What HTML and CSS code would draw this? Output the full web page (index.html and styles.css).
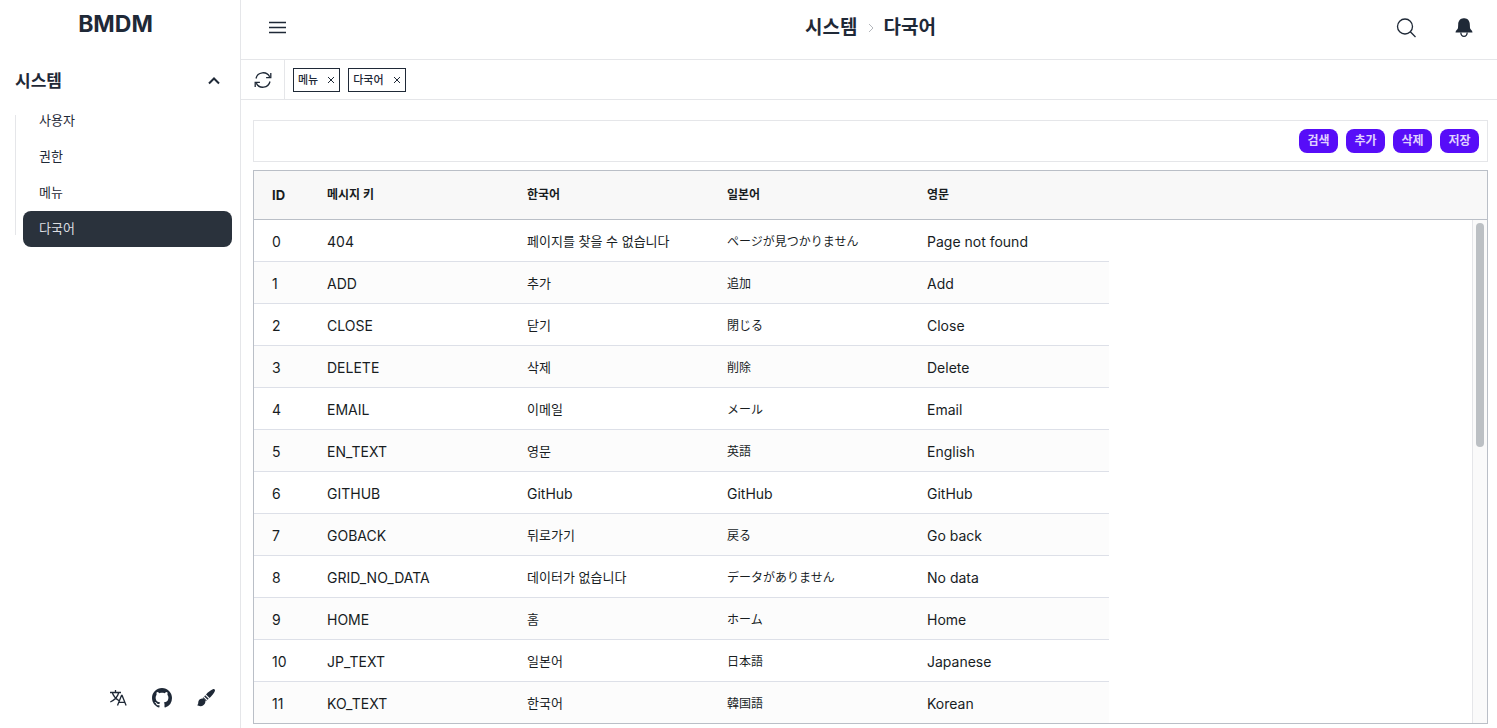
FILE: index.html
```html
<!DOCTYPE html>
<html lang="ko">
<head>
    <meta charset="UTF-8">
    <meta name="viewport" content="width=device-width, initial-scale=1.0">
    <title>BMDM</title>
    <link rel="stylesheet" href="styles.css">
</head>
<body>
    <aside class="sidebar">
        <a class="brand" href="#">BMDM</a>
        <nav class="menu">
            <button class="menu-title" type="button" aria-expanded="true">
                시스템
                <svg width="14" height="14" viewBox="0 0 14 14"><path d="M2 9.500 7 4.500l5 5" /></svg>
            </button>
            <ul class="submenu">
                <li><a href="#">사용자</a></li>
                <li><a href="#">권한</a></li>
                <li><a href="#">메뉴</a></li>
                <li><a class="active" href="#">다국어</a></li>
            </ul>
        </nav>
        <div class="sidebar-footer">
            <button class="icon-btn" type="button" aria-label="Language">
                <svg width="20" height="20" viewBox="0 0 20 20" class="line"><path d="M2 4.500h11M7.500 2v2.500M4.300 4.500c1 3.500 3.500 6.200 6.500 8M10.800 4.500C9.700 8.500 6.500 12 2.300 14M9.500 17.500l4-10h.6l4 10M10.900 14.300h5.800"/></svg>
            </button>
            <a class="icon-btn" href="#" aria-label="GitHub">
                <svg width="20" height="20" viewBox="0 0 16 16" fill="currentColor"><path d="M8 0C3.580 0 0 3.580 0 8c0 3.540 2.290 6.530 5.470 7.590.4.070.55-.17.55-.38 0-.19-.01-.82-.01-1.490-2.010.37-2.530-.49-2.690-.94-.09-.23-.48-.94-.82-1.130-.28-.15-.68-.52-.01-.53.63-.01 1.080.58 1.230.82.72 1.210 1.870.87 2.330.66.07-.52.28-.87.51-1.070-1.780-.2-3.640-.89-3.640-3.950 0-.87.31-1.590.82-2.150-.08-.2-.36-1.020.08-2.120 0 0 .67-.21 2.200.82.64-.18 1.320-.27 2-.27s1.360.09 2 .27c1.530-1.040 2.200-.82 2.200-.82.44 1.100.16 1.920.08 2.120.51.56.82 1.270.82 2.150 0 3.070-1.870 3.750-3.650 3.950.29.25.54.73.54 1.480 0 1.070-.01 1.930-.01 2.200 0 .21.15.46.55.38A8.010 8.010 0 0 0 16 8c0-4.420-3.580-8-8-8z"/></svg>
            </a>
            <button class="icon-btn" type="button" aria-label="Theme">
                <svg width="20" height="20" viewBox="0 0 20 20" fill="currentColor"><path d="M16.800 1.200c1.300-.7 2.600.5 2.100 1.800-.9 2.400-3 4.900-5.300 7l-3.600-3.600c2-2.200 4.400-4.200 6.800-5.200zM9.200 7.300l3.500 3.500-1.100 1-3.400-3.400zM6 10.600c1.800-.6 3.800 1.400 3.400 3.400-.4 2.700-2.600 4.200-5 4.200-1.300 0-2.300-.3-3.400-1.100.8-.4 1.200-1 1.200-2.200 0-2.400 1.500-4 3.800-4.300z"/><path d="M7.400 9.200l3.300 3.300-.7.7-3.300-3.300z"/></svg>
            </button>
        </div>
    </aside>

    <div class="page">
        <header class="topbar">
            <button class="icon-btn" type="button" aria-label="Toggle menu">
                <svg width="20" height="20" viewBox="0 0 20 20" class="line"><path d="M2 4.500h17M2 9.500h17M2 14.500h17"/></svg>
            </button>
            <h1 class="breadcrumb">
                <span>시스템</span>
                <svg width="6" height="10" viewBox="0 0 6 10"><path d="M1 1l4 4-4 4"/></svg>
                <span>다국어</span>
            </h1>
            <div class="topbar-actions">
                <button class="icon-btn" type="button" aria-label="Search">
                    <svg width="20" height="20" viewBox="0 0 20 20" class="line"><circle cx="9" cy="8.500" r="7.500"/><path d="M14.300 13.800l5.200 5.200"/></svg>
                </button>
                <button class="icon-btn" type="button" aria-label="Notifications">
                    <svg width="20" height="20" viewBox="0 0 20 20"><path fill="currentColor" d="M10.500.3h1c3.200.2 5.200 2.700 5.300 6L17 10c.1 1.500 2.500 2.300 2.500 4.500h-17C2.500 12.300 4.900 11.500 5 10l.2-3.700c.1-3.300 2.100-5.800 5.300-6z"/><path d="M7.800 14.500c.2 2.600 1.500 3.800 3.200 3.800s3-1.200 3.200-3.800" fill="none" stroke="currentColor" stroke-width="1.300"/></svg>
                </button>
            </div>
        </header>

        <div class="tabs">
            <button class="refresh" type="button" aria-label="Refresh">
                <svg width="20" height="20" viewBox="0 0 20 20" class="line"><path d="M3 8.500a7.300 7.300 0 0 1 13.700-1.600M17 11.500A7.300 7.300 0 0 1 3.300 13.100"/><path d="M17.800 3v4.700h-4.700M2.200 17v-4.700h4.700"/></svg>
            </button>
            <div class="tab-list">
                <div class="tab">
                    <a href="#">메뉴</a>
                    <button type="button" aria-label="메뉴 닫기"><svg width="8" height="8" viewBox="0 0 8 8"><path d="M1 1l6 6M7 1 1 7"/></svg></button>
                </div>
                <div class="tab">
                    <a href="#">다국어</a>
                    <button type="button" aria-label="다국어 닫기"><svg width="8" height="8" viewBox="0 0 8 8"><path d="M1 1l6 6M7 1 1 7"/></svg></button>
                </div>
            </div>
        </div>

        <main class="content">
            <div class="toolbar">
                <button class="btn" type="button">검색</button>
                <button class="btn" type="button">추가</button>
                <button class="btn" type="button">삭제</button>
                <button class="btn" type="button">저장</button>
            </div>

            <div class="grid">
                <table>
                    <colgroup>
                        <col class="col-id">
                        <col class="col-text">
                        <col class="col-text">
                        <col class="col-text">
                        <col class="col-text">
                        <col>
                    </colgroup>
                    <thead>
                        <tr><th>ID</th><th class="ko">메시지 키</th><th class="ko">한국어</th><th class="ko">일본어</th><th class="ko">영문</th><th class="filler"></th></tr>
                    </thead>
                    <tbody>
                        <tr><td>0</td><td>404</td><td class="ko">페이지를 찾을 수 없습니다</td><td class="ja" lang="ja">ページが見つかりません</td><td>Page not found</td><td class="filler"></td></tr>
                        <tr><td>1</td><td>ADD</td><td class="ko">추가</td><td class="ja" lang="ja">追加</td><td>Add</td><td class="filler"></td></tr>
                        <tr><td>2</td><td>CLOSE</td><td class="ko">닫기</td><td class="ja" lang="ja">閉じる</td><td>Close</td><td class="filler"></td></tr>
                        <tr><td>3</td><td>DELETE</td><td class="ko">삭제</td><td class="ja" lang="ja">削除</td><td>Delete</td><td class="filler"></td></tr>
                        <tr><td>4</td><td>EMAIL</td><td class="ko">이메일</td><td class="ja" lang="ja">メール</td><td>Email</td><td class="filler"></td></tr>
                        <tr><td>5</td><td>EN_TEXT</td><td class="ko">영문</td><td class="ja" lang="ja">英語</td><td>English</td><td class="filler"></td></tr>
                        <tr><td>6</td><td>GITHUB</td><td>GitHub</td><td>GitHub</td><td>GitHub</td><td class="filler"></td></tr>
                        <tr><td>7</td><td>GOBACK</td><td class="ko">뒤로가기</td><td class="ja" lang="ja">戻る</td><td>Go back</td><td class="filler"></td></tr>
                        <tr><td>8</td><td>GRID_NO_DATA</td><td class="ko">데이터가 없습니다</td><td class="ja" lang="ja">データがありません</td><td>No data</td><td class="filler"></td></tr>
                        <tr><td>9</td><td>HOME</td><td class="ko">홈</td><td class="ja" lang="ja">ホーム</td><td>Home</td><td class="filler"></td></tr>
                        <tr><td>10</td><td>JP_TEXT</td><td class="ko">일본어</td><td class="ja" lang="ja">日本語</td><td>Japanese</td><td class="filler"></td></tr>
                        <tr><td>11</td><td>KO_TEXT</td><td class="ko">한국어</td><td class="ja" lang="ja">韓国語</td><td>Korean</td><td class="filler"></td></tr>
                    </tbody>
                </table>
                <div class="scrollbar"><div class="thumb"></div></div>
            </div>
        </main>
    </div>
</body>
</html>
```
FILE: styles.css
```css
:root {
    --text-color: #1f2937;
    --line-color: #e5e6e9;
    --grid-border: #babfc7;
    --primary-color: #570df8;
}

* {
    margin: 0;
    padding: 0;
    box-sizing: border-box;
}

body {
    display: flex;
    height: 100vh;
    overflow: hidden;
    font-family: Inter, "Noto Sans CJK KR", sans-serif;
    font-size: 14px;
    line-height: 20px;
    color: var(--text-color);
    background-color: #fff;
}

a {
    color: inherit;
    text-decoration: none;
}

button {
    border: none;
    background: none;
    color: inherit;
    font: inherit;
    cursor: pointer;
}

svg {
    display: block;
}

.line {
    fill: none;
    stroke: currentColor;
    stroke-width: 1.3;
}

.icon-btn {
    display: flex;
    align-items: center;
    justify-content: center;
}

/* Sidebar */

.sidebar {
    display: flex;
    flex-direction: column;
    flex: none;
    width: 241px;
    border-right: 1px solid var(--line-color);
}

.brand {
    padding: 8px 9px 0 0;
    text-align: center;
    font-size: 23px;
    font-weight: 700;
    line-height: 32px;
}

.menu {
    padding: 21px 8px 0 15px;
}

.menu-title {
    display: flex;
    align-items: center;
    justify-content: space-between;
    width: 100%;
    height: 40px;
    padding-right: 11px;
    font-size: 17px;
    font-weight: 700;
}

.menu-title svg {
    fill: none;
    stroke: currentColor;
    stroke-width: 2;
}

.submenu {
    position: relative;
    margin-top: 2px;
    padding-left: 8px;
    list-style: none;
}

.submenu::before {
    content: "";
    position: absolute;
    top: 12px;
    bottom: 12px;
    left: 0;
    width: 1px;
    background-color: var(--line-color);
}

.submenu a {
    display: block;
    padding: 7px 16px 9px;
    border-radius: 8px;
    font-size: 13px;
}

.submenu .active {
    background-color: #2a323c;
    color: #dcdee1;
}

.sidebar-footer {
    display: flex;
    justify-content: flex-end;
    gap: 24px;
    margin-top: auto;
    padding: 0 24px 20px 0;
}

/* Header */

.page {
    display: flex;
    flex-direction: column;
    flex: 1;
    min-width: 0;
}

.topbar {
    display: flex;
    align-items: center;
    justify-content: space-between;
    height: 60px;
    padding: 0 24px 4px 26px;
    border-bottom: 1px solid var(--line-color);
}

.topbar > .icon-btn {
    margin-right: 58px;
}

.breadcrumb {
    display: flex;
    align-items: center;
    gap: 10px;
    font-size: 19px;
    font-weight: 700;
}

.breadcrumb svg {
    fill: none;
    stroke: #b5b8bd;
}

.topbar-actions {
    display: flex;
    gap: 37px;
}

/* Tabs */

.tabs {
    display: flex;
    height: 40px;
    border-bottom: 1px solid var(--line-color);
}

.refresh {
    padding: 0 11px 0 12px;
    border-right: 1px solid var(--line-color);
}

.tab-list {
    display: flex;
    align-items: center;
    gap: 8px;
    padding-left: 8px;
}

.tab {
    display: flex;
    align-items: center;
    gap: 9px;
    height: 24px;
    padding: 0 4px;
    border: 1px solid var(--text-color);
    font-size: 11px;
    font-weight: 500;
}

.tab svg {
    stroke: currentColor;
}

/* Content */

.content {
    display: flex;
    flex-direction: column;
    gap: 8px;
    flex: 1;
    min-height: 0;
    padding: 20px 9px 4px 12px;
}

.toolbar {
    display: flex;
    justify-content: flex-end;
    gap: 8px;
    flex: none;
    padding: 8px;
    border: 1px solid var(--line-color);
}

.btn {
    min-width: 39px;
    height: 24px;
    padding: 0 8px;
    border-radius: 8px;
    background-color: var(--primary-color);
    color: #e0d2fe;
    font-size: 12px;
    font-weight: 600;
}

/* Grid */

.grid {
    position: relative;
    flex: 1;
    min-height: 0;
    overflow: hidden;
    border: 1px solid var(--grid-border);
    color: #181d1f;
}

.grid table {
    width: 100%;
    table-layout: fixed;
    border-collapse: separate;
    border-spacing: 0;
}

.col-id {
    width: 55px;
}

.col-text {
    width: 200px;
}

.grid th {
    height: 49px;
    padding-left: 18px;
    border-bottom: 1px solid var(--grid-border);
    background-color: #f8f8f8;
    text-align: left;
    font-size: 13px;
    font-weight: 700;
}

.grid th.ko {
    font-size: 12px;
}

.grid td {
    height: 42px;
    padding: 2px 0 0 18px;
    border-bottom: 1px solid #dde0e8;
    white-space: nowrap;
}

.grid tr:nth-child(even) td {
    background-color: #fcfcfc;
}

.grid td.ko {
    padding-top: 0;
    font-size: 13px;
}

.grid td.ja {
    font-family: Inter, "Noto Sans CJK JP", sans-serif;
    font-size: 12px;
}

.grid tbody tr .filler {
    border-bottom: none;
    background-color: #fff;
}

.scrollbar {
    position: absolute;
    top: 49px;
    right: 0;
    bottom: 0;
    width: 15px;
    padding: 3px;
    border-left: 1px solid var(--line-color);
    background-color: #fafafa;
}

.thumb {
    width: 8px;
    height: 45%;
    border-radius: 4px;
    background-color: #bcc0c4;
}
```
